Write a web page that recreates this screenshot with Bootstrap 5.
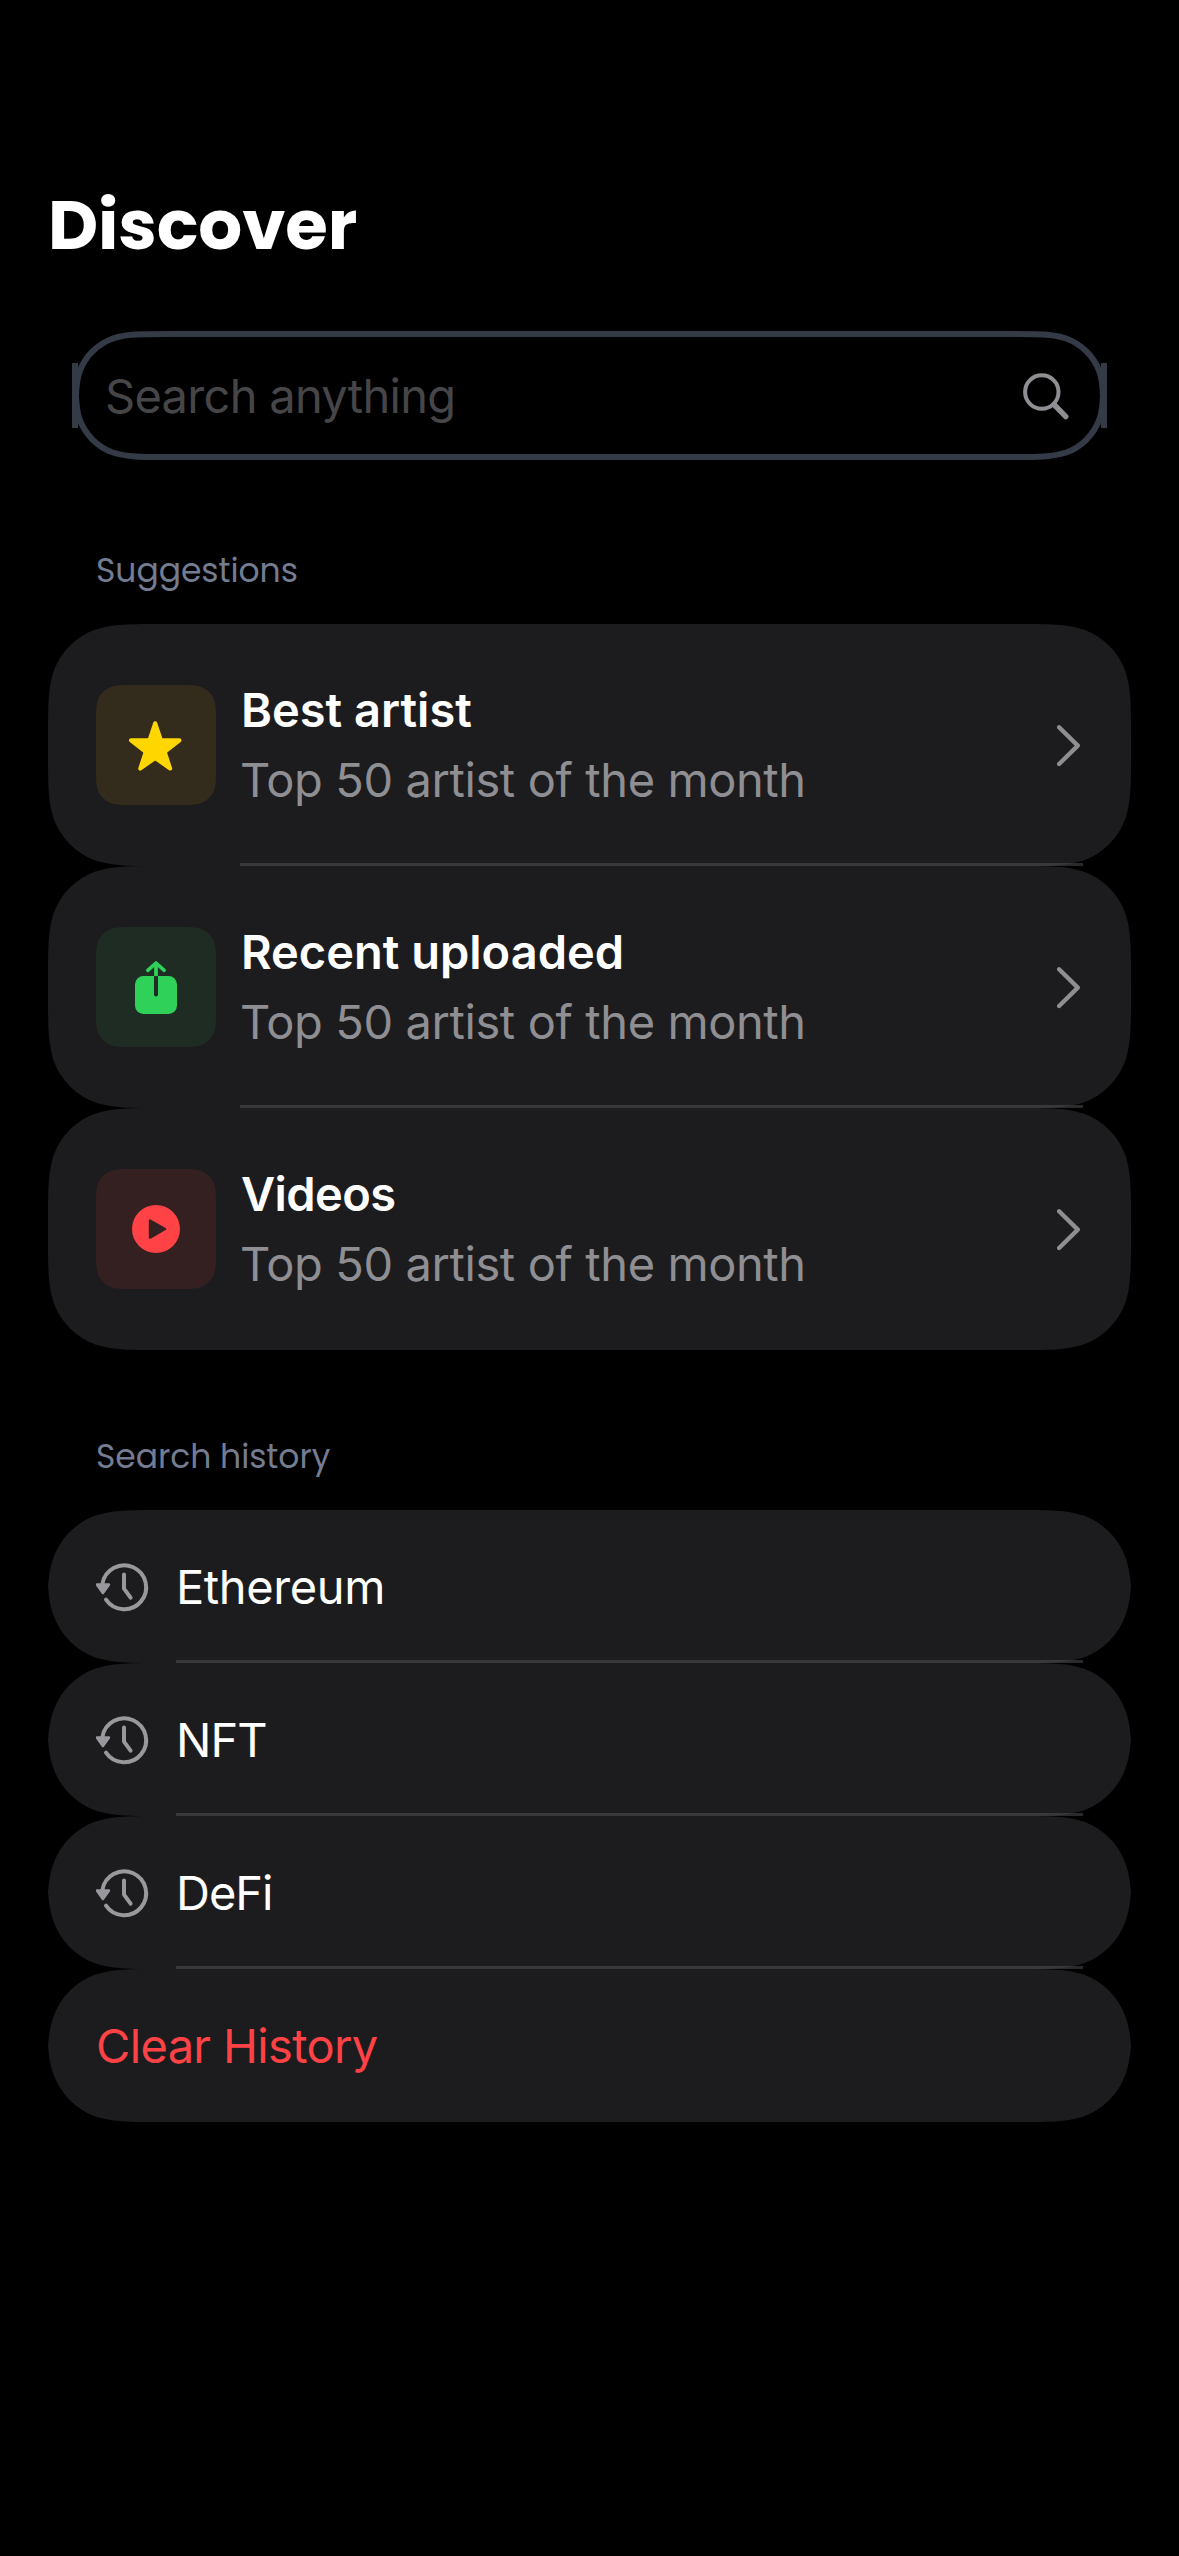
<!DOCTYPE html>
<html lang="en" data-bs-theme="dark">
<head>
<meta charset="utf-8">
<meta name="viewport" content="width=device-width, initial-scale=1">
<title>Discover</title>
<link href="https://cdn.jsdelivr.net/npm/bootstrap@5.3.0/dist/css/bootstrap.min.css" rel="stylesheet">
<style>
  body { background: #000; color: #fff; font-family: Inter, "Open Sans", sans-serif; font-size: 47px; min-height: 2556px; letter-spacing: -.4px; }
  .screen { width: 1179px; padding: 185px 48px 0; }
  .page-title { font-family: Poppins, Inter, sans-serif; font-weight: 700; font-size: 69px; line-height: 80px; letter-spacing: -.1px; margin-bottom: 66px; }
  .search-field { height: 129px; margin: 0 24px 87px; padding: 0 36px 0 33px; position: relative; }
  .search-outline { position: absolute; left: 0; top: 0; pointer-events: none; }
  .search-input { background: transparent; border: 0; padding: 0; color: #fff; font-size: 47px; line-height: 60px; letter-spacing: -.7px; box-shadow: none; }
  .search-input::placeholder { color: #464648; opacity: 1; }
  .section-label { font-family: Poppins, Inter, sans-serif; font-size: 33px; line-height: 48px; color: #747c92; letter-spacing: -.05px; margin: 0 0 29px; padding-left: 48px; font-weight: 400; }
  .suggestion-list { margin-bottom: 83px; }
  .list-row { position: relative; padding: 0 48px; isolation: isolate; color: #fff; text-decoration: none; }
  .list-row::before { content: ""; position: absolute; inset: 0; z-index: -1; background: #1c1c1e; }
  .row-tall { height: 242px; }
  .row-tall::before { clip-path: path("M0 114.65C0 81.64 0 65.13 5.62 47.36C12.68 27.96 27.96 12.68 47.36 5.62C65.13 0 81.64 0 114.65 0H968.35C1001.36 0 1017.87 0 1035.64 5.62C1055.04 12.68 1070.32 27.96 1077.38 47.36C1083 65.13 1083 81.64 1083 114.65V127.35C1083 160.36 1083 176.87 1077.38 194.64C1070.32 214.04 1055.04 229.32 1035.64 236.38C1017.87 242 1001.36 242 968.35 242H114.65C81.64 242 65.13 242 47.36 236.38C27.96 229.32 12.68 214.04 5.62 194.64C0 176.87 0 160.36 0 127.35Z"); }
  .row-short { height: 153px; }
  .row-short::before { clip-path: path("M0 76.5C1 66 2 57 5.62 47.36C12.68 27.96 27.96 12.68 47.36 5.62C65.13 0 81.64 0 114.65 0H968.35C1001.36 0 1017.87 0 1035.64 5.62C1055.04 12.68 1070.32 27.96 1077.38 47.36C1081 57 1082 66 1083 76.5C1082 87 1081 96 1077.38 105.64C1070.32 125.04 1055.04 140.32 1035.64 147.38C1017.87 153 1001.36 153 968.35 153H114.65C81.64 153 65.13 153 47.36 147.38C27.96 140.32 12.68 125.04 5.62 105.64C2 96 1 87 0 76.5Z"); }
  .row-short span { padding-top: 2px; }
  .with-rule::after { content: ""; position: absolute; right: 48px; bottom: 0; height: 3px; background: rgba(84,84,88,.5); }
  .row-tall.with-rule::after { left: 192px; }
  .row-short.with-rule::after { left: 128px; }
  .tile-icon { width: 120px; height: 120px; margin-right: 24px; }
  .row-title { font-weight: 600; line-height: 70px; letter-spacing: 0; padding-left: 1px; }
  .row-title.title-tight { letter-spacing: -.6px; }
  .row-note { line-height: 70px; color: #8e8e93; letter-spacing: -.4px; }
  .clock-icon { margin-right: 20px; }
  .txt-tight { letter-spacing: -1px; }
  .clear-text { color: #ff4245; letter-spacing: -.65px; }
</style>
<script src="https://cdn.jsdelivr.net/npm/bootstrap@5.3.0/dist/js/bootstrap.bundle.min.js"></script>
</head>
<body>
<svg width="0" height="0" class="position-absolute" aria-hidden="true">
  <symbol id="squircle" viewBox="0 0 120 120">
    <path d="M0 36.7C0 26.1 0 20.8 1.8 15.2C4.06 8.95 8.95 4.06 15.2 1.8C20.8 0 26.1 0 36.7 0H83.3C93.9 0 99.2 0 104.8 1.8C111.05 4.06 115.94 8.95 118.2 15.2C120 20.8 120 26.1 120 36.7V83.3C120 93.9 120 99.2 118.2 104.8C115.94 111.05 111.05 115.94 104.8 118.2C99.2 120 93.9 120 83.3 120H36.7C26.1 120 20.8 120 15.2 118.2C8.95 115.94 4.06 111.05 1.8 104.8C0 99.2 0 93.9 0 83.3Z"/>
  </symbol>
  <symbol id="chevron" viewBox="0 0 26 44">
    <path d="M2.1 4.2L20.8 22.6L2.1 41" fill="none" stroke="#8e8e93" stroke-width="4.3" stroke-linecap="round" stroke-linejoin="round"/>
  </symbol>
  <symbol id="clock" viewBox="0 0 60 60">
    <g fill="none" stroke="#98989d" stroke-width="4" stroke-linecap="round" stroke-linejoin="round">
      <path d="M6.4 27A22 22 0 1 1 10 42.7"/>
      <path d="M28 17.5V31.6L34.6 40.6"/>
    </g>
    <path d="M1 27.6H12.8L6.8 35.8Z" fill="#98989d" stroke="#98989d" stroke-width="2.8" stroke-linejoin="round"/>
  </symbol>
</svg>

<main class="screen">
  <h1 class="page-title">Discover</h1>

  <div class="search-field d-flex align-items-center">
    <svg class="search-outline" width="1035" height="129" fill="none" stroke="#343a46" stroke-width="6">
      <path d="M4 64.5C4.3 55 4.8 49 7.5 40.9C13.1 25.4 25.4 13.1 40.9 7.5C55.1 3 68.3 3 94.7 3H940.3C966.7 3 979.9 3 994.1 7.5C1009.6 13.1 1021.9 25.4 1027.5 40.9C1030.2 49 1030.7 55 1031 64.5C1030.7 74 1030.2 80 1027.5 88.1C1021.9 103.6 1009.6 115.9 994.1 121.5C979.9 126 966.7 126 940.3 126H94.7C68.3 126 55.1 126 40.9 121.5C25.4 115.9 13.1 103.6 7.5 88.1C4.8 80 4.3 74 4 64.5Z"/>
      <path d="M3 32V97M1032 32V97"/>
    </svg>
    <input class="form-control search-input flex-grow-1" type="text" placeholder="Search anything" aria-label="Search anything">
    <svg width="50" height="50" class="flex-shrink-0" fill="none" stroke="#8e8e93">
      <circle cx="20.8" cy="21" r="16.7" stroke-width="4"/>
      <path d="M33 33.5L44.8 45.6" stroke-width="5.4" stroke-linecap="round"/>
    </svg>
  </div>

  <h2 class="section-label">Suggestions</h2>
  <div class="suggestion-list d-flex flex-column">
    <a class="list-row row-tall with-rule d-flex align-items-center">
      <svg class="tile-icon flex-shrink-0" viewBox="0 0 120 120">
        <use href="#squircle" fill="#332c1c"/>
        <path d="M59.2 38.2L65 55.3H83.5L68.7 66.8L74.2 83.6L59.2 73L44.2 83.6L49.7 66.8L35 55.3H53.4Z" fill="#ffd600" stroke="#ffd600" stroke-width="4" stroke-linejoin="round"/>
      </svg>
      <div class="flex-grow-1"><div class="row-title">Best artist</div><div class="row-note">Top 50 artist of the month</div></div>
      <svg width="26" height="44"><use href="#chevron"/></svg>
    </a>
    <a class="list-row row-tall with-rule d-flex align-items-center">
      <svg class="tile-icon flex-shrink-0" viewBox="0 0 120 120">
        <use href="#squircle" fill="#1f2c24"/>
        <rect x="39" y="49" width="42" height="38" rx="8.5" fill="#30d158"/>
        <path d="M60 50V67.5" stroke="#1f2c24" stroke-width="4" stroke-linecap="round"/>
        <path d="M60 49V37" stroke="#30d158" stroke-width="3.8"/>
        <path d="M51.8 43.3L60 36L68.2 43.3" fill="none" stroke="#30d158" stroke-width="3.6" stroke-linecap="round" stroke-linejoin="round"/>
      </svg>
      <div class="flex-grow-1"><div class="row-title">Recent uploaded</div><div class="row-note">Top 50 artist of the month</div></div>
      <svg width="26" height="44"><use href="#chevron"/></svg>
    </a>
    <a class="list-row row-tall d-flex align-items-center">
      <svg class="tile-icon flex-shrink-0" viewBox="0 0 120 120">
        <use href="#squircle" fill="#342021"/>
        <circle cx="60" cy="60" r="24" fill="#ff4245"/>
        <path d="M54 51.6V68.6L69 60Z" fill="#342021" stroke="#342021" stroke-width="2.4" stroke-linejoin="round"/>
      </svg>
      <div class="flex-grow-1"><div class="row-title title-tight">Videos</div><div class="row-note">Top 50 artist of the month</div></div>
      <svg width="26" height="44"><use href="#chevron"/></svg>
    </a>
  </div>

  <h2 class="section-label">Search history</h2>
  <div class="d-flex flex-column">
    <a class="list-row row-short with-rule d-flex align-items-center">
      <svg class="clock-icon overflow-visible" width="60" height="60"><use href="#clock"/></svg><span>Ethereum</span>
    </a>
    <a class="list-row row-short with-rule d-flex align-items-center">
      <svg class="clock-icon" width="60" height="60"><use href="#clock"/></svg><span class="txt-tight">NFT</span>
    </a>
    <a class="list-row row-short with-rule d-flex align-items-center">
      <svg class="clock-icon" width="60" height="60"><use href="#clock"/></svg><span class="txt-tight">DeFi</span>
    </a>
    <a class="list-row row-short d-flex align-items-center"><span class="clear-text">Clear History</span></a>
  </div>
</main>
</body>
</html>
